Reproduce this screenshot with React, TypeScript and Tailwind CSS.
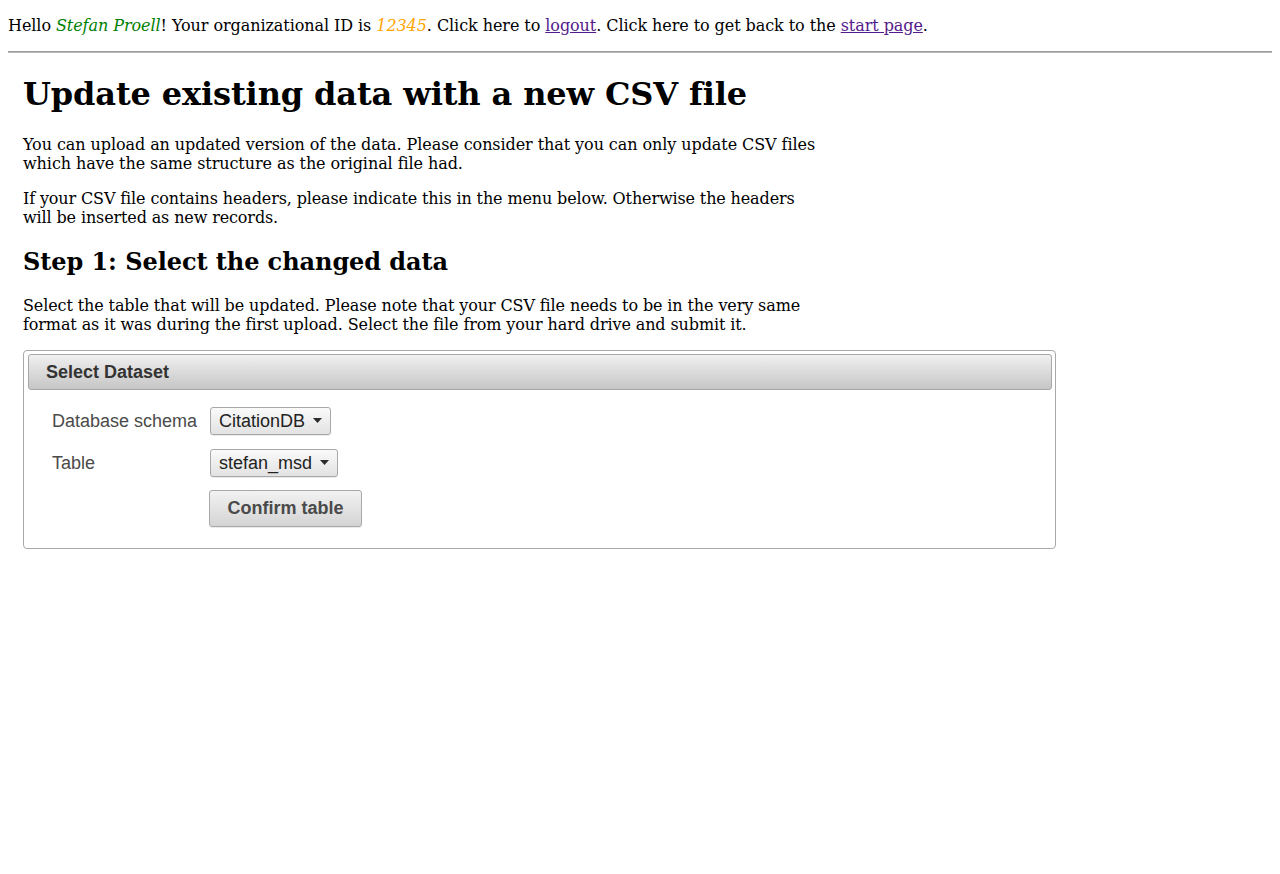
import React from "react";

function Caret() {
  return (
    <svg width="9" height="5" viewBox="0 0 9 5" className="ml-[8px]">
      <path d="M0 0 L9 0 L4.5 5 Z" fill="#2b2b2b" />
    </svg>
  );
}

function SelectBox({ label }: { label: string }) {
  return (
    <div className="inline-flex h-[28px] items-center rounded-[3px] border border-[#a8a8a8] bg-gradient-to-b from-[#fafafa] to-[#e2e2e2] pl-[8px] pr-[8px] text-[18px] text-[#222] shadow-[0_1px_0_rgba(0,0,0,0.08)]">
      <span className="leading-none">{label}</span>
      <Caret />
    </div>
  );
}

export default function App() {
  const serif = { fontFamily: '"DejaVu Serif", serif' };
  return (
    <div className="bg-white min-h-[874px] px-[8px] text-black" style={serif}>
      <p className="pt-[16px] text-[16px] leading-[19px] tracking-[-0.07px]">
        Hello <i className="text-[#008000]">Stefan Proell</i>! Your organizational ID is{" "}
        <i className="text-[#ffa500]">12345</i>. Click here to{" "}
        <a href="#" className="text-[#551a8b] underline">logout</a>. Click here to get back to the{" "}
        <a href="#" className="text-[#551a8b] underline">start page</a>.
      </p>
      <div className="mt-[16px] h-[2px] border-t border-b border-t-[#9a9a9a] border-b-[#b8b8b8]" />
      <div className="pl-[15px]">
        <h1 className="mt-[23px] text-[32px] font-bold leading-[37px] tracking-[-0.12px]">
          Update existing data with a new CSV file
        </h1>
        <div className="w-[800px]">
          <p className="mt-[22px] text-[16px] leading-[19px] tracking-[-0.075px]">
            You can upload an updated version of the data. Please consider that you can only update CSV files which have the same structure as the original file had.
          </p>
          <p className="mt-[16px] text-[16px] leading-[19px] tracking-[-0.13px]">
            If your CSV file contains headers, please indicate this in the menu below. Otherwise the headers will be inserted as new records.
          </p>
          <h2 className="mt-[21px] text-[24px] font-bold leading-[28px] tracking-[-0.07px]">Step 1: Select the changed data</h2>
          <p className="mt-[20px] text-[16px] leading-[19px] tracking-[-0.11px]">
            Select the table that will be updated. Please note that your CSV file needs to be in the very same format as it was during the first upload. Select the file from your hard drive and submit it.
          </p>
        </div>
        <div
          className="mt-[16px] w-[1033px] rounded-[4px] border border-[#a8a8a8] pl-[4px] pr-[3px] pt-[3px] pb-[21px]"
          style={{ fontFamily: '"Liberation Sans", Arial, sans-serif' }}
        >
          <div className="flex h-[36px] items-center rounded-[3px] border border-[#a8a8a8] bg-gradient-to-b from-[#f0f0f0] to-[#c6c6c6] pl-[17px] text-[18px] font-bold text-[#333]">
            Select Dataset
          </div>
          <div className="pl-[24px] pt-[16px]">
            <div className="flex items-center">
              <div className="w-[158px] pt-[2px] text-[18px] text-[#4a4a4a]">Database schema</div>
              <SelectBox label="CitationDB" />
            </div>
            <div className="mt-[13px] flex items-center">
              <div className="w-[158px] pt-[2px] text-[18px] text-[#4a4a4a]">Table</div>
              <SelectBox label="stefan_msd" />
            </div>
            <div className="mt-[13px] flex">
              <div className="w-[157px]" />
              <button className="h-[37px] w-[153px] rounded-[3px] border border-[#a8a8a8] bg-gradient-to-b from-[#f2f2f2] to-[#d4d4d4] text-[18px] font-bold text-[#4a4a4a] shadow-[0_1px_0_rgba(0,0,0,0.08)]">
                Confirm table
              </button>
            </div>
          </div>
        </div>
      </div>
    </div>
  );
}
